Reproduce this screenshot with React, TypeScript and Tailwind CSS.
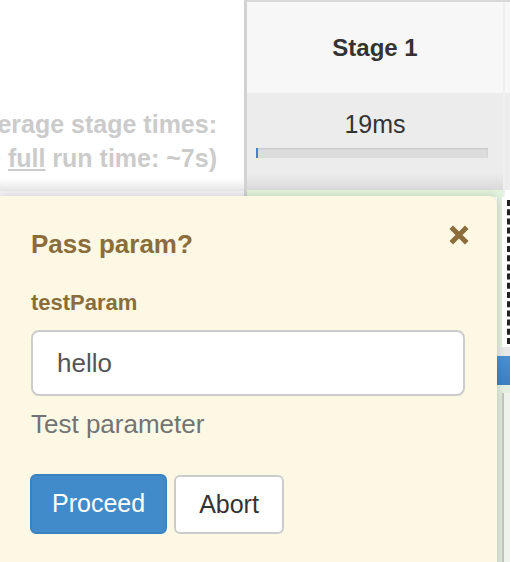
import React from "react";

function CloseIcon() {
  return (
    <svg width="22" height="22" viewBox="0 0 22 22">
      <path d="M5 5 L17 17 M17 5 L5 17" stroke="#8a6d3b" strokeWidth="5" strokeLinecap="square" />
    </svg>
  );
}

function InputPopover() {
  return (
    <div className="absolute left-0 top-[196px] w-[497px] h-[380px] bg-[#fcf8e3] rounded-tr-[8px] shadow-[0_0_8px_rgba(0,0,0,0.18)] px-[31px] pt-[34px]">
      <button type="button" className="absolute right-[27px] top-[28px] p-0 bg-transparent border-0">
        <CloseIcon />
      </button>
      <h3 className="text-[26px] leading-[29px] font-bold text-[#8a6d3b]">Pass param?</h3>
      <div className="mt-[31px] text-[22px] leading-[26px] font-bold text-[#8a6d3b]">testParam</div>
      <input
        readOnly
        value="hello"
        className="mt-[14px] w-[434px] h-[66px] bg-white border-2 border-[#cccccc] rounded-[8px] px-[24px] text-[26px] text-[#555555] outline-none"
      />
      <div className="mt-[13px] text-[26px] leading-[30px] text-[#737373]">Test parameter</div>
      <div className="mt-[35px] flex gap-[7px]">
        <button type="button" className="h-[60px] -ml-[1px] px-[20px] rounded-[6px] bg-[#428bca] border-2 border-[#3d82bf] text-[25px] text-white">
          Proceed
        </button>
        <button type="button" className="h-[59px] mt-[1px] px-[23px] rounded-[6px] bg-white border-2 border-[#cccccc] text-[25px] text-[#333333]">
          Abort
        </button>
      </div>
    </div>
  );
}

export default function App() {
  return (
    <div className="relative w-[510px] h-[562px] overflow-hidden bg-white font-['Liberation_Sans','Helvetica_Neue',Arial,sans-serif]">
      <div className="flex h-[197px]">
        {/* averages column */}
        <div className="w-[244px] flex flex-col">
          <div className="flex-1 overflow-hidden pt-[107px] pr-[27px] text-[25px] leading-[34px] font-bold text-[#cbcbcb] whitespace-nowrap">
            <div className="flex justify-end">
              <span className="shrink-0">Average stage times:</span>
            </div>
            <div className="flex justify-end">
              <span className="shrink-0">
                (Average <span className="underline">full</span> run time: ~7s)
              </span>
            </div>
          </div>
          <div className="h-[13px] bg-gradient-to-b from-white to-[#e6e6e6]" />
          <div className="h-[6px] bg-[#f4f4f4]" />
        </div>
        <div className="w-[3px] bg-[#d2d2d2]" />

        {/* stage 1 column */}
        <div className="w-[256px] flex flex-col border-t-2 border-[#d9d9d9]">
          <div className="h-[91px] bg-[#f7f7f7] flex items-center justify-center text-[24px] font-bold text-[#333333]">
            Stage 1
          </div>
          <div className="h-[97px] flex flex-col bg-[#ececec]">
            <div className="pt-[16px] text-center text-[25px] leading-[30px] text-[#333333]">19ms</div>
            <div className="mt-[9px] ml-[9px] mr-[15px] h-[10px] bg-[#dcdcdc] shadow-[inset_0_1px_2px_rgba(0,0,0,0.1)] flex">
              <div className="w-[2px] bg-[#4a7fd0]" />
            </div>
            <div className="flex-1" />
            <div className="h-[16px] bg-gradient-to-b from-[#ececec] to-[#d9d9d9]" />
          </div>
          <div className="flex-1 bg-[#e2f3dc]" />
        </div>
        <div className="w-[2px] border-t-2 border-[#d9d9d9] bg-[#efefef]" />

        {/* next column */}
        <div className="flex-1 flex flex-col border-t-2 border-[#d9d9d9]">
          <div className="h-[91px] bg-[#f7f7f7]" />
          <div className="h-[97px] bg-[#ececec]" />
          <div className="flex-1 bg-white" />
        </div>
      </div>

      {/* lower rows, mostly hidden under the popover */}
      <div className="flex justify-end h-[365px]">
        <div className="w-[13px] flex flex-col">
          <div className="h-[150px] flex">
            <div className="w-[5px] bg-[#e3efdf]" />
            <div className="w-[5px] bg-white" />
            <div className="w-[3px] border-l-[3px] border-dashed border-[#222222] my-[3px]" />
          </div>
          <div className="h-[9px] bg-[#e8e8e8]" />
          <div className="h-[29px] bg-gradient-to-b from-[#4b90d2] to-[#3f7fc0]" />
          <div className="h-[8px] bg-[#e4efe0]" />
          <div className="flex-1 flex">
            <div className="w-[5px] bg-[#dfeadb]" />
            <div className="w-[2px] bg-[#c4c4c4]" />
            <div className="w-[6px] bg-[#eef3ec]" />
          </div>
        </div>
      </div>

      <InputPopover />
    </div>
  );
}
